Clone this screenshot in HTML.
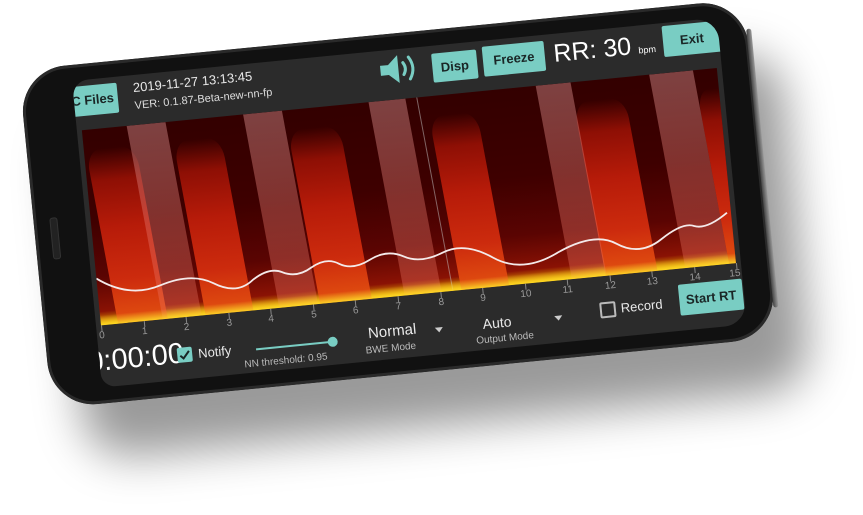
<!DOCTYPE html>
<html><head><meta charset="utf-8"><style>
html,body{margin:0;padding:0;width:863px;height:515px;overflow:hidden;background:#fff;font-family:"Liberation Sans",sans-serif}
#frame{position:absolute;left:72px;top:81px;width:648px;height:308px;transform-origin:0 0;transform:rotate(-5.6deg)}
#phone{position:absolute;left:-52px;top:-16px;width:729px;height:340px;border-radius:46px;background:#111;box-shadow:30px 55px 45px rgba(0,0,0,0.40), inset 0 0 0 3px #2a2a2a;}
#side{position:absolute;right:-4px;top:30px;width:5px;height:280px;background:linear-gradient(90deg,#444,#999);border-radius:4px}
#grille{position:absolute;left:16px;top:150px;width:6px;height:40px;border-radius:3px;background:#222;border:1px solid #333}
#screen{position:absolute;left:0;top:0;width:648px;height:308px;background:#2b2b2b;border-radius:16px 22px 22px 14px;overflow:hidden}
.btn{position:absolute;background:#79cdc3;color:#1a2626;font-weight:bold;font-size:13px;text-align:center;border-radius:2px}
.t{position:absolute;color:#e8e8e8;white-space:nowrap}
#spec{position:absolute;left:5px;top:50px;width:638px;height:196px;overflow:hidden;background:linear-gradient(180deg,#330000 0%,#3e0000 45%,#5a0402 75%,#8a1204 93%,#f0b000 100%)}
#inner{position:absolute;left:-30px;top:0;width:700px;height:196px;transform-origin:0 0;transform:skewX(5deg)}
.p{position:absolute;top:10%;height:90%;background:linear-gradient(180deg,rgba(150,10,0,0) 0%,rgba(170,20,6,0.75) 18%,rgba(195,30,10,0.9) 45%,rgba(210,45,14,0.95) 75%,rgba(225,80,16,1) 100%);border-radius:30% 30% 0 0/12% 12% 0 0}
.b{position:absolute;top:0;height:196px;background:linear-gradient(180deg,rgba(200,130,130,0.5),rgba(230,120,110,0.4) 50%,rgba(240,120,100,0.33))}
.tk{position:absolute;top:246px;width:1px;height:6px;background:#888}
.lb{position:absolute;top:251px;font-size:10px;color:#999;width:20px;margin-left:-10px;text-align:center}
</style></head><body>
<div id="frame">
 <div id="phone"><div id="side"></div><div id="grille"></div></div>
 <div id="screen">
  <div class="btn" style="left:-20px;top:6px;width:64px;height:30px;line-height:30px;text-align:right;padding-right:4px;box-sizing:border-box">C Files</div>
  <div class="t" style="left:60px;top:5px;font-size:13px">2019-11-27 13:13:45</div>
  <div class="t" style="left:60px;top:25px;font-size:11px;color:#ddd">VER: 0.1.87-Beta-new-nn-fp</div>
  <svg style="position:absolute;left:306px;top:4px" width="42" height="32" viewBox="0 0 42 32">
   <path d="M2 11 H10 L20 2 V30 L10 21 H2 Z" fill="#79cdc3"/>
   <path d="M25 10 Q29 16 25 22" stroke="#79cdc3" stroke-width="3" fill="none" stroke-linecap="round"/>
   <path d="M31 5 Q38 16 31 27" stroke="#79cdc3" stroke-width="3" fill="none" stroke-linecap="round"/>
  </svg>
  <div class="btn" style="left:360px;top:8px;width:45px;height:29px;line-height:29px">Disp</div>
  <div class="btn" style="left:411px;top:6px;width:62px;height:30px;line-height:30px">Freeze</div>
  <div class="t" style="left:482px;top:6px;font-size:25px;color:#fff">RR: 30 <span style="font-size:9px">bpm</span></div>
  <div class="btn" style="left:592px;top:3px;width:58px;height:31px;line-height:31px">Exit</div>
  <div id="spec">
   <div id="inner">
    <div class="p" style="left:30px;width:50px"></div>
    <div class="p" style="left:118px;width:48px"></div>
    <div class="p" style="left:233px;width:52px"></div>
    <div class="p" style="left:375px;width:48px"></div>
    <div class="p" style="left:520px;width:52px"></div>
    <div class="p" style="left:644px;width:40px"></div>
    <div class="b" style="left:75px;width:39px"></div>
    <div class="b" style="left:192px;width:39px"></div>
    <div class="b" style="left:318px;width:37px"></div>
    <div class="b" style="left:486px;width:35px"></div>
    <div class="b" style="left:600px;width:44px"></div>
    <div style="position:absolute;left:366px;top:0;width:1px;height:196px;background:rgba(200,200,200,0.5)"></div>
   </div>
   <div style="position:absolute;left:0;bottom:0;width:638px;height:10px;background:linear-gradient(180deg,rgba(255,200,0,0),rgba(255,220,40,0.9))"></div>
   <svg style="position:absolute;left:0;top:0" width="638" height="196">
    <path fill="none" stroke="#f4eaea" stroke-width="1.8" d="M0,149 Q31,172 63,162 Q95,152 116,165 Q138,179 155,166 Q173,154 186,161 Q200,168 215,159 Q231,150 243,158 Q256,166 274,157 Q292,148 308,157 Q324,166 347,157 Q370,148 397,167 Q425,186 462,168 Q500,151 521,165 Q543,180 566,165 Q589,150 600,155 Q612,160 634,145"/>
   </svg>
  </div>
  <div class="tk" style="left:5px"></div><div class="lb" style="left:5px">0</div>
  <div class="tk" style="left:48px"></div><div class="lb" style="left:48px">1</div>
  <div class="tk" style="left:90px"></div><div class="lb" style="left:90px">2</div>
  <div class="tk" style="left:133px"></div><div class="lb" style="left:133px">3</div>
  <div class="tk" style="left:175px"></div><div class="lb" style="left:175px">4</div>
  <div class="tk" style="left:218px"></div><div class="lb" style="left:218px">5</div>
  <div class="tk" style="left:260px"></div><div class="lb" style="left:260px">6</div>
  <div class="tk" style="left:303px"></div><div class="lb" style="left:303px">7</div>
  <div class="tk" style="left:346px"></div><div class="lb" style="left:346px">8</div>
  <div class="tk" style="left:388px"></div><div class="lb" style="left:388px">9</div>
  <div class="tk" style="left:431px"></div><div class="lb" style="left:431px">10</div>
  <div class="tk" style="left:473px"></div><div class="lb" style="left:473px">11</div>
  <div class="tk" style="left:516px"></div><div class="lb" style="left:516px">12</div>
  <div class="tk" style="left:558px"></div><div class="lb" style="left:558px">13</div>
  <div class="tk" style="left:601px"></div><div class="lb" style="left:601px">14</div>
  <div class="tk" style="left:643px"></div><div class="lb" style="left:641px">15</div>
  <div class="t" style="left:-12px;top:266px;font-size:29px;color:#fff">0:00:00</div>
  <div style="position:absolute;left:78px;top:276px;width:15px;height:15px;background:#79cdc3;border-radius:2px">
   <svg width="15" height="15"><path d="M3 8 L6 11 L12 4" stroke="#1a2626" stroke-width="2" fill="none"/></svg></div>
  <div class="t" style="left:99px;top:276px;font-size:13px">Notify</div>
  <div style="position:absolute;left:157px;top:284px;width:77px;height:2px;background:#79cdc3"></div>
  <div style="position:absolute;left:229px;top:280px;width:10px;height:10px;border-radius:50%;background:#79cdc3"></div>
  <div class="t" style="left:144px;top:294px;font-size:10px;color:#bbb">NN threshold: 0.95</div>
  <div class="t" style="left:270px;top:272px;font-size:15px">Normal</div>
  <div class="t" style="left:266px;top:292px;font-size:10px;color:#bbb">BWE Mode</div>
  <div style="position:absolute;left:337px;top:281px;border:4px solid transparent;border-top:5px solid #ccc"></div>
  <div class="t" style="left:385px;top:274px;font-size:14px">Auto</div>
  <div class="t" style="left:377px;top:293px;font-size:10px;color:#bbb">Output Mode</div>
  <div style="position:absolute;left:457px;top:281px;border:4px solid transparent;border-top:5px solid #ccc"></div>
  <div style="position:absolute;left:503px;top:272px;width:12px;height:12px;border:2px solid #bbb;border-radius:2px"></div>
  <div class="t" style="left:524px;top:272px;font-size:13px">Record</div>
  <div class="btn" style="left:583px;top:262px;width:64px;height:31px;line-height:31px">Start RT</div>
 </div>
</div>
</body></html>
